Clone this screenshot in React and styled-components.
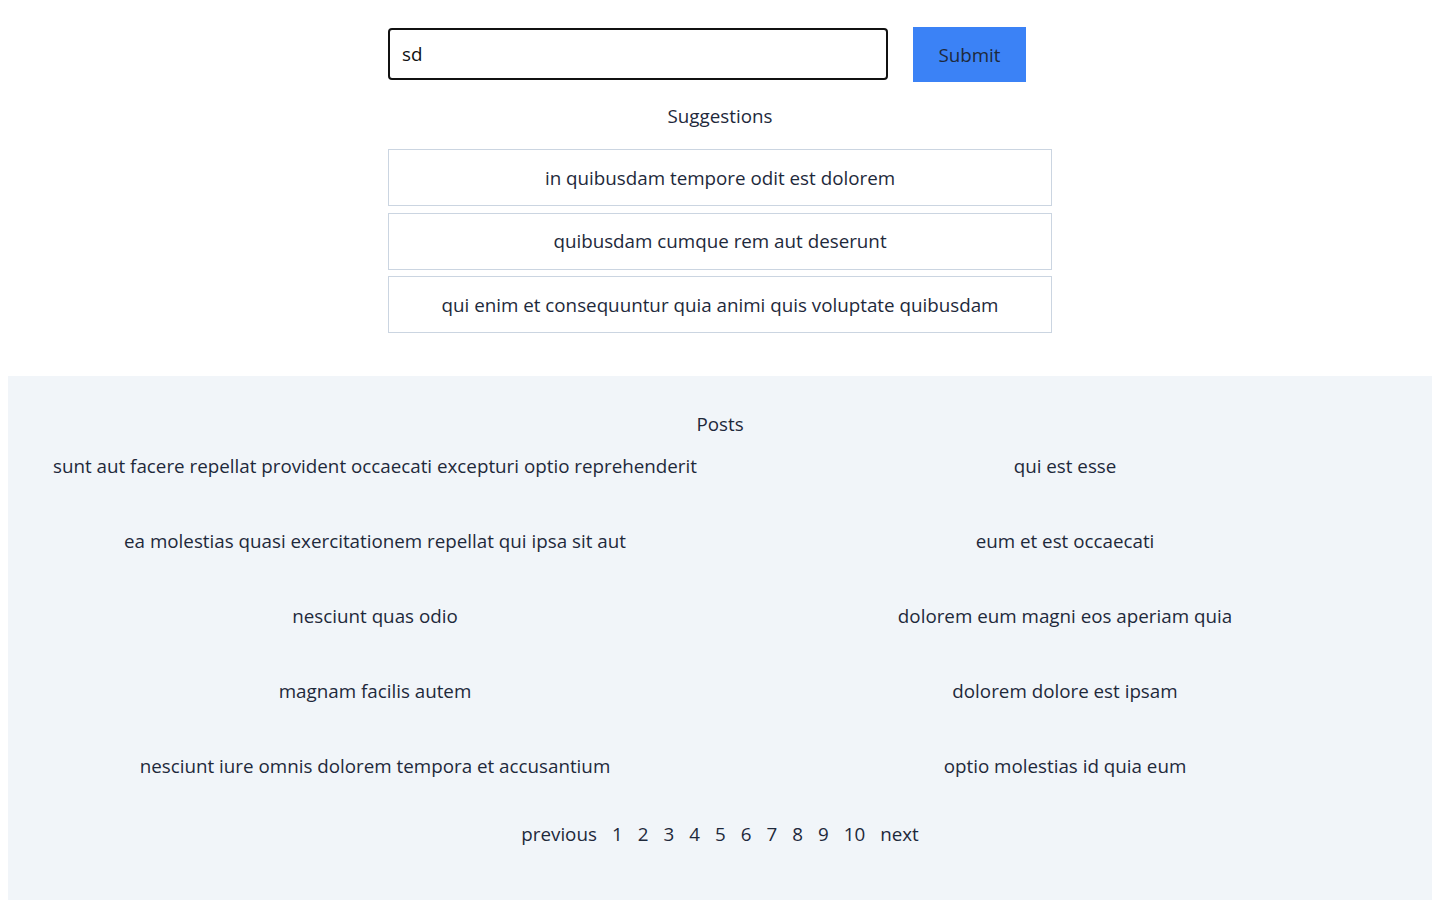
import React from 'react'
import styled, { createGlobalStyle } from 'styled-components'

const GlobalStyle = createGlobalStyle`
    body {
        margin: 8px;
        font-family: "Open Sans", "Noto Sans", sans-serif;
        font-size: 18.8px;
        color: #1e293b;
        background: #fff;
    }
    * { box-sizing: border-box; }
`

const SearchArea = styled.div`
    width: 664px;
    margin: 19px auto 0;
`

const Form = styled.form`
    display: flex;
    align-items: flex-start;
    gap: 25px;
`

const Input = styled.input`
    width: 500px;
    height: 52px;
    margin-top: 1px;
    border: 2px solid #111;
    border-radius: 4px;
    padding: 0 12px;
    font: inherit;
    color: #111;
    outline: none;
`

const SubmitButton = styled.button`
    width: 113px;
    height: 55px;
    border: none;
    background: #3b82f6;
    color: #1e293b;
    font: inherit;
    cursor: pointer;
`

const Heading = styled.div`
    text-align: center;
    line-height: 26px;
    padding: ${p => p.pad || '0'};
`

const SuggestionList = styled.ul`
    list-style: none;
    margin: 0;
    padding: 0;
    display: flex;
    flex-direction: column;
    gap: 6.5px;
`

const Suggestion = styled.li`
    height: 57px;
    border: 1px solid #cbd5e1;
    display: flex;
    align-items: center;
    justify-content: center;
`

const PostsSection = styled.section`
    margin-top: 43px;
    background: #f1f5f9;
    padding: 35px 22px 70px;
`

const PostGrid = styled.div`
    display: grid;
    grid-template-columns: 1fr 1fr;
    row-gap: 48px;
    margin-top: 16px;
`

const Post = styled.div`
    text-align: center;
    line-height: 27px;
`

const Pager = styled.div`
    display: flex;
    justify-content: center;
    gap: 15px;
    margin-top: 41px;
    line-height: 27px;
`

const PageLink = styled.span`
    cursor: pointer;
`

const suggestions = [
    'in quibusdam tempore odit est dolorem',
    'quibusdam cumque rem aut deserunt',
    'qui enim et consequuntur quia animi quis voluptate quibusdam',
]

const posts = [
    'sunt aut facere repellat provident occaecati excepturi optio reprehenderit',
    'qui est esse',
    'ea molestias quasi exercitationem repellat qui ipsa sit aut',
    'eum et est occaecati',
    'nesciunt quas odio',
    'dolorem eum magni eos aperiam quia',
    'magnam facilis autem',
    'dolorem dolore est ipsam',
    'nesciunt iure omnis dolorem tempora et accusantium',
    'optio molestias id quia eum',
]

const pages = ['previous', 1, 2, 3, 4, 5, 6, 7, 8, 9, 10, 'next']

export default function App() {
    return (
        <>
            <GlobalStyle />
            <SearchArea>
                <Form onSubmit={e => e.preventDefault()}>
                    <Input defaultValue="sd" />
                    <SubmitButton type="submit">Submit</SubmitButton>
                </Form>
                <Heading pad="21px 0 20px">Suggestions</Heading>
                <SuggestionList>
                    {suggestions.map(s => <Suggestion key={s}>{s}</Suggestion>)}
                </SuggestionList>
            </SearchArea>
            <PostsSection>
                <Heading>Posts</Heading>
                <PostGrid>
                    {posts.map(p => <Post key={p}>{p}</Post>)}
                </PostGrid>
                <Pager>
                    {pages.map(p => <PageLink key={p}>{p}</PageLink>)}
                </Pager>
            </PostsSection>
        </>
    )
}
